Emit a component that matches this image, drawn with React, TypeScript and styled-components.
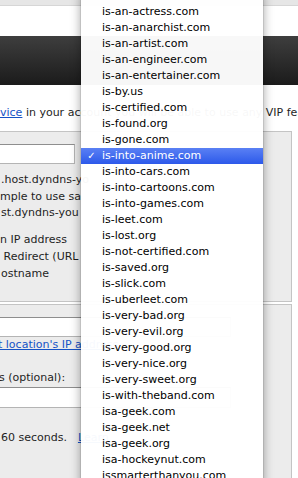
import { createGlobalStyle, styled } from 'styled-components';

const GlobalStyle = createGlobalStyle`
  html, body {
    margin: 0;
    padding: 0;
    background: #fff;
  }
`;

const Root = styled.div`
  position: relative;
  width: 298px;
  height: 478px;
  overflow: hidden;
  background: #fff;
  font-family: 'DejaVu Sans', 'Lucida Grande', sans-serif;
  font-size: 11px;
  color: #1e1e1e;
`;

const TopStrip = styled.div`
  height: 5px;
  background: #e6e6e6;
  border-bottom: 1px solid #d6d6d6;
`;

const DarkBar = styled.div`
  margin-top: 30px;
  height: 49px;
  background: linear-gradient(#3e3e3e, #1b1b1b);
`;

const Intro = styled.p`
  margin: 0;
  padding: 20px 0 10px;
  line-height: 16px;
  white-space: nowrap;
`;

const Link = styled.a<{ $gap?: number }>`
  color: #1553c6;
  text-decoration: underline;
  margin-left: ${(p) => p.$gap ?? 0}px;
`;

const Panel = styled.section<{ $height?: number; $gap?: number }>`
  box-sizing: border-box;
  margin: ${(p) => p.$gap ?? 0}px 0 0 -2px;
  width: 294px;
  height: ${(p) => (p.$height ? `${p.$height}px` : 'auto')};
  padding: 12px 0 40px 1px;
  border: 1px solid #c4c4c4;
  background: #ececec;
`;

const Field = styled.div<{ $width: number; $height: number; $top?: number }>`
  box-sizing: border-box;
  margin: ${(p) => p.$top ?? 0}px 0 0 -1px;
  width: ${(p) => p.$width}px;
  height: ${(p) => p.$height}px;
  background: #fff;
  border: 1px solid #b4b4b4;
  border-top-color: #8e8e8e;
`;

const Lines = styled.div<{ $top: number; $lh: number }>`
  margin-top: ${(p) => p.$top}px;
  line-height: ${(p) => p.$lh}px;
  white-space: pre;
`;

const Line = styled.div<{ $indent?: number }>`
  text-indent: ${(p) => p.$indent ?? 0}px;
`;

const Menu = styled.ul`
  position: absolute;
  left: 81px;
  top: -10px;
  width: 182px;
  margin: 0;
  padding: 14px 0 0;
  list-style: none;
  background: rgba(255, 255, 255, 0.965);
  box-shadow: 0 0 0 1px rgba(0, 0, 0, 0.08), 0 4px 10px rgba(0, 0, 0, 0.38);
`;

const Item = styled.li<{ $selected?: boolean }>`
  display: flex;
  height: 16px;
  line-height: 16px;
  white-space: nowrap;
  color: ${(p) => (p.$selected ? '#fff' : '#000')};
  background: ${(p) => (p.$selected ? 'linear-gradient(#5a80f4, #2c59ea)' : 'transparent')};
`;

const CheckSlot = styled.span`
  width: 21px;
  text-align: center;
  font-size: 10px;
`;

const domains = [
  'is-an-actress.com',
  'is-an-anarchist.com',
  'is-an-artist.com',
  'is-an-engineer.com',
  'is-an-entertainer.com',
  'is-by.us',
  'is-certified.com',
  'is-found.org',
  'is-gone.com',
  'is-into-anime.com',
  'is-into-cars.com',
  'is-into-cartoons.com',
  'is-into-games.com',
  'is-leet.com',
  'is-lost.org',
  'is-not-certified.com',
  'is-saved.org',
  'is-slick.com',
  'is-uberleet.com',
  'is-very-bad.org',
  'is-very-evil.org',
  'is-very-good.org',
  'is-very-nice.org',
  'is-very-sweet.org',
  'is-with-theband.com',
  'isa-geek.com',
  'isa-geek.net',
  'isa-geek.org',
  'isa-hockeynut.com',
  'issmarterthanyou.com',
];

const selected = 'is-into-anime.com';

export default function App() {
  return (
    <Root>
      <GlobalStyle />
      <TopStrip />
      <DarkBar />
      <Intro>
        <Link>vice</Link> in your account you will be able to use any VIP features.
      </Intro>

      <Panel $height={171}>
        <Field $width={76} $height={20} />
        <Lines $top={8} $lh={16.5}>
          <Line $indent={1}>.host.dyndns-yo</Line>
          <Line>mple to use sa</Line>
          <Line $indent={1}>st.dyndns-you</Line>
        </Lines>
        <Lines $top={9} $lh={17}>
          <Line>n IP address</Line>
          <Line> Redirect (URL</Line>
          <Line $indent={1}>ostname</Line>
        </Lines>
      </Panel>

      <Panel $gap={2}>
        <Field $width={232} $height={20} />
        <Lines $top={0} $lh={16}>
          <Line $indent={-2}>
            <Link>t location's IP address</Link>
          </Line>
        </Lines>
        <Lines $top={17} $lh={16}>
          <Line $indent={-1}>s (optional):</Line>
        </Lines>
        <Field $width={232} $height={21} $top={1} />
        <Lines $top={22} $lh={16}>
          <Line $indent={1}>
            60 seconds.<Link $gap={11}>Learn</Link>
          </Line>
        </Lines>
      </Panel>

      <Menu>
        {domains.map((d) => (
          <Item key={d} $selected={d === selected}>
            <CheckSlot>{d === selected ? '✓' : ''}</CheckSlot>
            <span>{d}</span>
          </Item>
        ))}
      </Menu>
    </Root>
  );
}
